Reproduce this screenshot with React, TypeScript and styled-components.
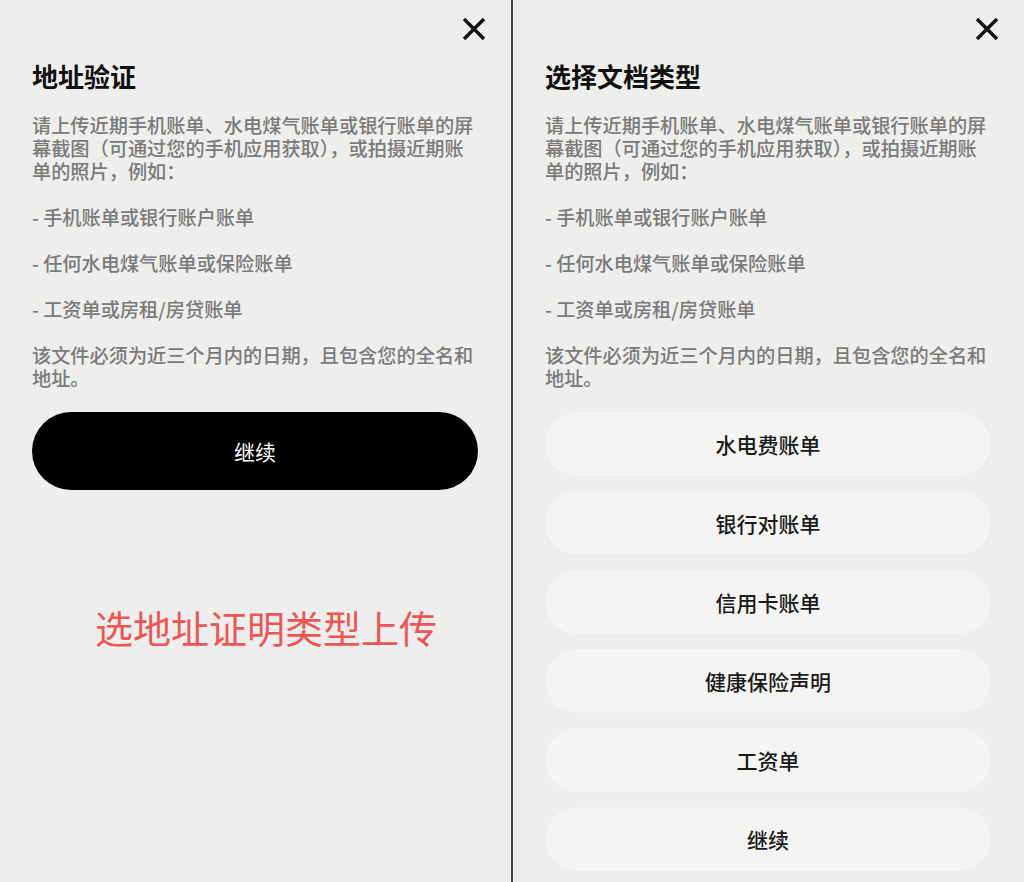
import React from "react";
import styled, { createGlobalStyle } from "styled-components";

const Global = createGlobalStyle`
  html, body { margin: 0; padding: 0; background: #eeeeec; }
  body { font-family: "Noto Sans CJK SC", "Noto Sans", sans-serif; }
  * { box-sizing: border-box; }
`;

const Page = styled.div`
  display: grid;
  grid-template-columns: 511px 2px 511px;
  width: 1024px;
  height: 882px;
  background: #eeeeec;
  overflow: hidden;
`;

const Divider = styled.div`
  background: #454545;
  height: 100%;
`;

const Panel = styled.section`
  display: flex;
  flex-direction: column;
  padding: 14px 33px 0 32px;
`;

const Header = styled.div`
  display: flex;
  justify-content: flex-end;
  height: 30px;
  margin-right: -11px;
`;

const CloseButton = styled.button`
  display: flex;
  align-items: center;
  justify-content: center;
  width: 30px;
  height: 30px;
  padding: 0;
  border: none;
  background: transparent;
  cursor: pointer;
`;

const Title = styled.h1`
  margin: 16px 0 0;
  font-size: 26px;
  line-height: 32px;
  font-weight: 700;
  color: #111;
`;

const Body = styled.div`
  margin-top: 22px;
  display: flex;
  flex-direction: column;
  gap: 23px;
`;

const Para = styled.p`
  margin: 0;
  font-size: 19.2px;
  line-height: 23px;
  font-weight: 500;
  color: #7a7a7a;
`;

const PrimaryButton = styled.button`
  margin-top: 22px;
  height: 78px;
  width: 100%;
  border: none;
  border-radius: 39px;
  background: #000;
  color: #fff;
  font-family: inherit;
  font-size: 21px;
  font-weight: 400;
`;

const Note = styled.div`
  margin-top: 114px;
  padding-left: 22px;
  text-align: center;
  font-size: 38px;
  line-height: 46px;
  color: #ee5555;
`;

const OptionList = styled.div`
  margin-top: 22px;
  display: flex;
  flex-direction: column;
  gap: 15px;
`;

const Option = styled.button`
  height: 64px;
  width: 100%;
  border: none;
  border-radius: 32px;
  background: #f4f4f3;
  box-shadow: 0 0 3px rgba(0, 0, 0, 0.025);
  color: #1a1a1a;
  font-family: inherit;
  font-size: 21px;
  font-weight: 500;
`;

const CloseIcon = () => (
  <svg width="24" height="24" viewBox="0 0 24 24">
    <path d="M2 2 L22 22 M22 2 L2 22" stroke="#111" strokeWidth="3.4" strokeLinecap="butt" fill="none" />
  </svg>
);

const Instructions = () => (
  <Body>
    <Para>请上传近期手机账单、水电煤气账单或银行账单的屏幕截图（可通过您的手机应用获取），或拍摄近期账单的照片，例如：</Para>
    <Para>- 手机账单或银行账户账单</Para>
    <Para>- 任何水电煤气账单或保险账单</Para>
    <Para>- 工资单或房租/房贷账单</Para>
    <Para>该文件必须为近三个月内的日期，且包含您的全名和地址。</Para>
  </Body>
);

const options = ["水电费账单", "银行对账单", "信用卡账单", "健康保险声明", "工资单", "继续"];

export default function App() {
  return (
    <>
      <Global />
      <Page>
        <Panel>
          <Header>
            <CloseButton aria-label="关闭">
              <CloseIcon />
            </CloseButton>
          </Header>
          <Title>地址验证</Title>
          <Instructions />
          <PrimaryButton>继续</PrimaryButton>
          <Note>选地址证明类型上传</Note>
        </Panel>
        <Divider />
        <Panel>
          <Header>
            <CloseButton aria-label="关闭">
              <CloseIcon />
            </CloseButton>
          </Header>
          <Title>选择文档类型</Title>
          <Instructions />
          <OptionList>
            {options.map((o) => (
              <Option key={o}>{o}</Option>
            ))}
          </OptionList>
        </Panel>
      </Page>
    </>
  );
}
